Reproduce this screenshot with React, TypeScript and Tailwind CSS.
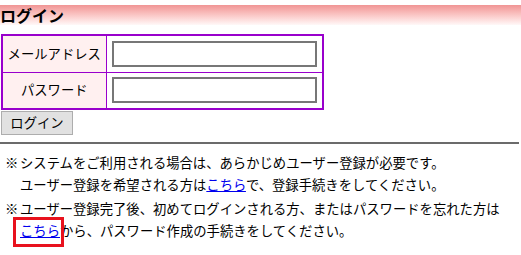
const font = { fontFamily: '"Noto Sans CJK JP", "Noto Sans", sans-serif' };

export default function App() {
  return (
    <div className="relative w-[521px] h-[255px] bg-white text-black text-[13.33px]" style={font}>
      <div className="mt-[5px] h-[20px] bg-gradient-to-b from-[#f09494] to-[#fff8f8]">
        <h1 className="font-bold text-[16px] leading-[20px]">ログイン</h1>
      </div>

      <table className="ml-[1px] mt-[9px] w-[323px] border-collapse border-2 border-[#9900cc]">
        <tbody>
          <tr className="h-[37px]">
            <td className="w-[104px] border border-[#9900cc] bg-[#fff0f0] text-center leading-[20px] px-0">
              メールアドレス
            </td>
            <td className="border border-[#9900cc] px-[5px]">
              <input className="block w-full h-[26px] border-2 border-[#777] bg-white" />
            </td>
          </tr>
          <tr className="h-[37px]">
            <td className="border border-[#9900cc] bg-[#fff0f0] text-center leading-[20px]">パスワード</td>
            <td className="border border-[#9900cc] px-[5px]">
              <input type="password" className="block w-full h-[26px] border-2 border-[#777] bg-white" />
            </td>
          </tr>
        </tbody>
      </table>

      <button className="ml-[1px] mt-[1px] w-[72px] h-[24px] border border-[#adadad] bg-[#e1e1e1] text-[13.33px] leading-[20px]">
        ログイン
      </button>

      <hr className="mt-[7px] mr-[2px] border-0 h-[2px] bg-[#6b6b6b]" />

      <div className="mt-[8px] pl-[5px] leading-[22px]">
        <div className="flex">
          <span className="w-[15px] shrink-0">※</span>
          <div>
            システムをご利用される場合は、あらかじめユーザー登録が必要です。
            <br />
            ユーザー登録を希望される方は
            <a href="#" className="text-[#0000ee] underline">こちら</a>
            で、登録手続きをしてください。
          </div>
        </div>
        <div className="flex mt-[2px]">
          <span className="w-[15px] shrink-0">※</span>
          <div>
            ユーザー登録完了後、初めてログインされる方、またはパスワードを忘れた方は
            <br />
            <a href="#" className="text-[#0000ee] underline">こちら</a>
            から、パスワード作成の手続きをしてください。
          </div>
        </div>
      </div>

      <div className="absolute left-[13px] top-[212px] w-[51px] h-[30px] border-[3px] border-[#e8121e]" />
    </div>
  );
}
